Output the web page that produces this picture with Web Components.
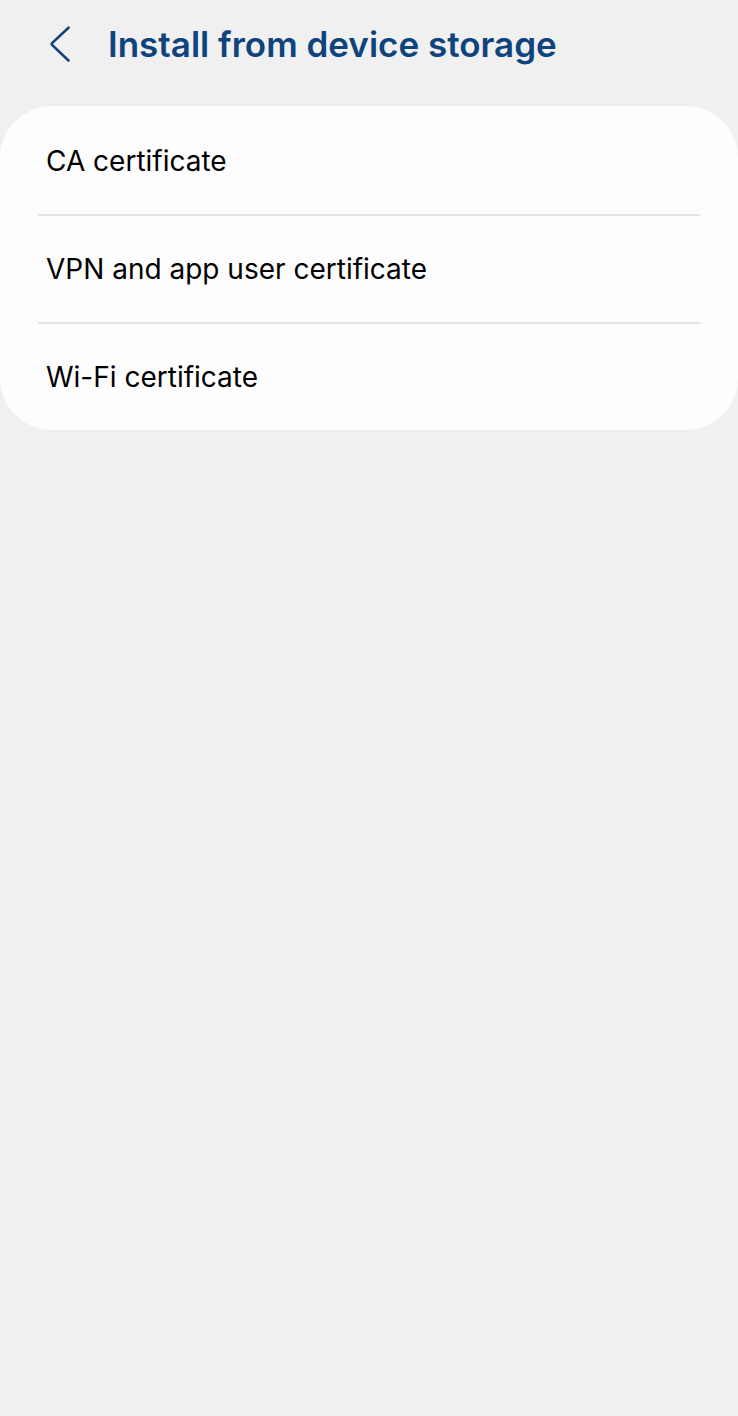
<!DOCTYPE html>
<html lang="en">
<head>
  <meta charset="UTF-8">
  <meta name="viewport" content="width=device-width, initial-scale=1.0">
  <title>Install from device storage</title>
  <style>
    :root {
      --page-color: #f0f0f0;
      --card-color: #fdfdfd;
      --title-color: #0f437d;
      --text-color: #000;
      --line-color: #e3e4e5;
    }

    body {
      margin: 0;
      min-height: 100vh;
      background-color: var(--page-color);
      color: var(--text-color);
      font-family: Inter, Roboto, sans-serif;
    }
  </style>
</head>
<body>
  <settings-page>
    <page-header slot="header">Install from device storage</page-header>
    <settings-item>CA certificate</settings-item>
    <settings-item>VPN and app user certificate</settings-item>
    <settings-item>Wi-Fi certificate</settings-item>
  </settings-page>

  <script>
    class PageHeader extends HTMLElement {
      constructor() {
        super();
        this.attachShadow({ mode: "open" });
        this.shadowRoot.innerHTML = `
          <style>
            :host {
              display: block;
              color: var(--title-color);
            }

            header {
              display: flex;
              align-items: center;
              gap: 32px;
              padding: 22px 44px 40px;
            }

            button {
              display: flex;
              padding: 0;
              border: none;
              background: none;
              color: inherit;
              cursor: pointer;
            }

            h1 {
              margin: 0;
              font-size: 35px;
              font-weight: 600;
              line-height: 44px;
            }
          </style>
          <header>
            <button type="button" aria-label="Back">
              <svg width="32" height="40" viewBox="0 0 32 40" fill="none" stroke="currentColor" stroke-width="2.6" stroke-linecap="round" stroke-linejoin="round" aria-hidden="true">
                <path d="M24.500 3.700L8.300 18.900Q7.200 20 8.300 21.100L24.500 36.500" />
              </svg>
            </button>
            <h1><slot></slot></h1>
          </header>
        `;
      }

      connectedCallback() {
        this.shadowRoot.querySelector("button").addEventListener("click", this._goBack);
      }

      disconnectedCallback() {
        this.shadowRoot.querySelector("button").removeEventListener("click", this._goBack);
      }

      _goBack = () => {
        window.history.back();
      };
    }

    class SettingsItem extends HTMLElement {
      constructor() {
        super();
        this.attachShadow({ mode: "open" });
        this.shadowRoot.innerHTML = `
          <style>
            :host {
              display: block;
              border-bottom: 2px solid var(--line-color);
            }

            :host(:last-child) {
              border-bottom: none;
            }

            button {
              display: block;
              width: 100%;
              padding: 35px 8px;
              border: none;
              background: none;
              color: inherit;
              font-family: inherit;
              font-size: 28px;
              line-height: 36px;
              text-align: left;
              cursor: pointer;
            }
          </style>
          <button type="button"><slot></slot></button>
        `;
      }
    }

    class SettingsPage extends HTMLElement {
      constructor() {
        super();
        this.attachShadow({ mode: "open" });
        this.shadowRoot.innerHTML = `
          <style>
            :host {
              display: block;
            }

            main {
              padding: 2px 38px 0;
              border-radius: 52px;
              background-color: var(--card-color);
            }
          </style>
          <slot name="header"></slot>
          <main><slot></slot></main>
        `;
      }
    }

    customElements.define("page-header", PageHeader);
    customElements.define("settings-item", SettingsItem);
    customElements.define("settings-page", SettingsPage);
  </script>
</body>
</html>
